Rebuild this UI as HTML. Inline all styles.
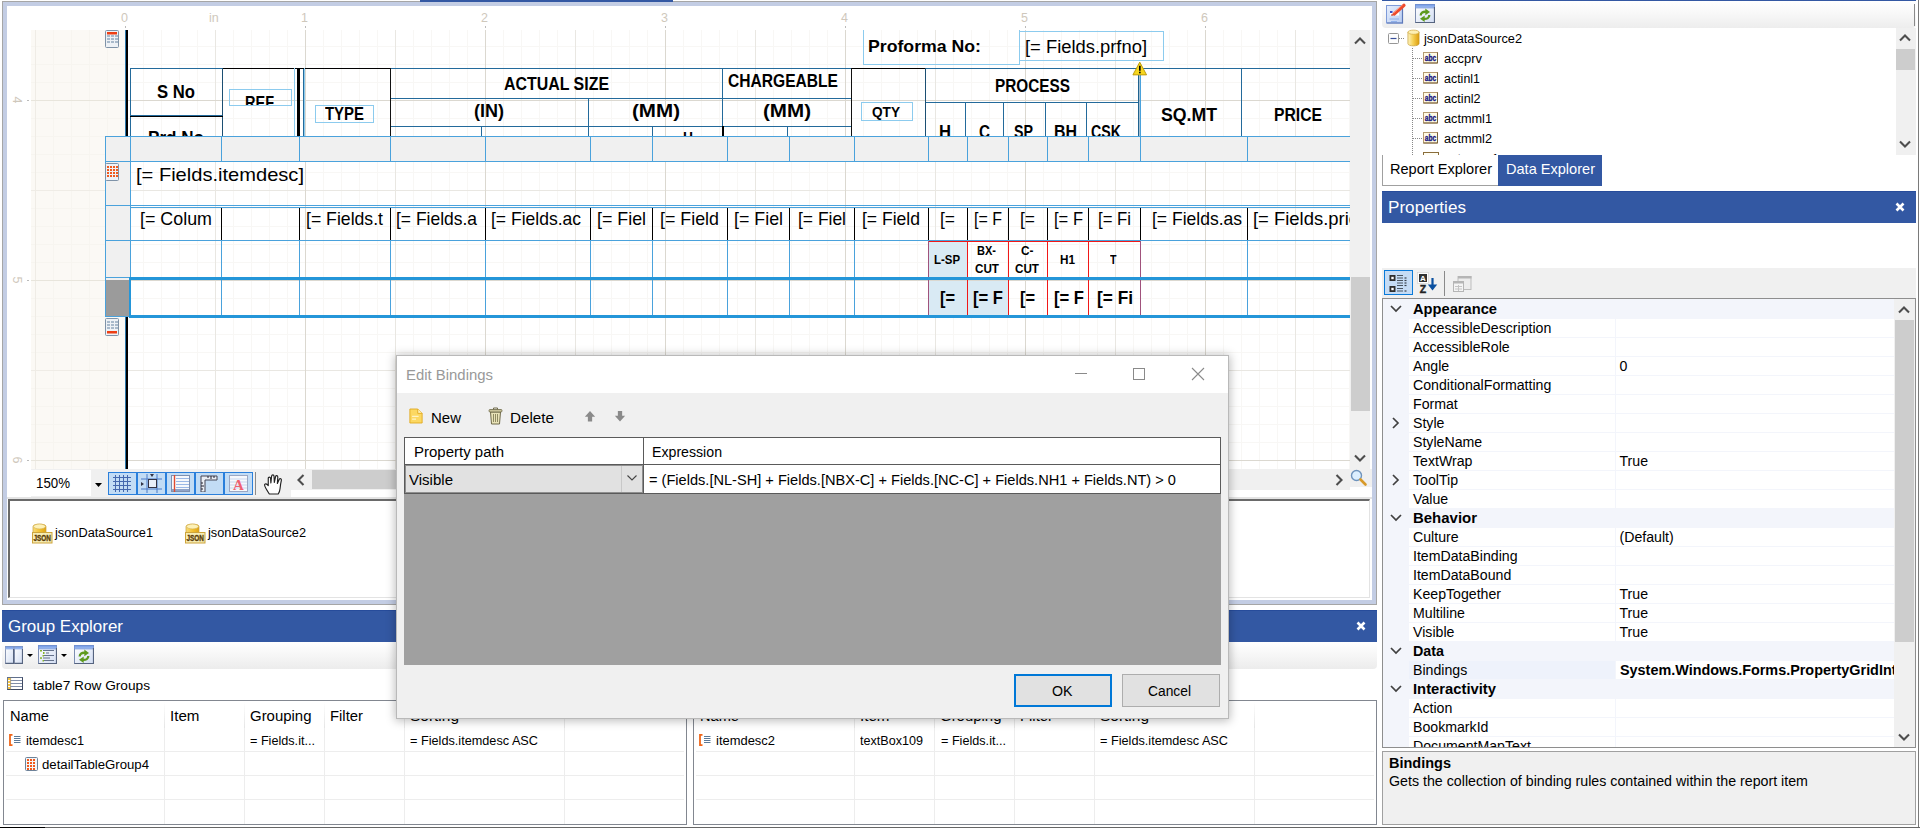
<!DOCTYPE html>
<html lang="en"><head><meta charset="utf-8"><title>Report Designer - Edit Bindings</title>
<style>
html,body{margin:0;padding:0;}
body{width:1920px;height:828px;position:relative;overflow:hidden;background:#fff;font-family:"Liberation Sans", "DejaVu Sans", sans-serif;}
div,span.t,svg{position:absolute;box-sizing:border-box;}
span.t{white-space:nowrap;transform-origin:0 50%;display:block;}
.clip{overflow:hidden;}
</style></head><body>
<div style="left:2px;top:1px;width:1375px;height:604px;background:#c3cde4;border:1px solid #a6a6a6;"></div>
<div style="left:7px;top:6px;width:1365px;height:594px;background:#fff;"></div>
<div style="left:420px;top:0px;width:253px;height:2px;background:#3358a3;"></div>
<div class="clip" style="left:31px;top:30px;width:1319px;height:439px;background-color:#fff;background-image:linear-gradient(to right,#dbd8d0 1px,transparent 1px),linear-gradient(to bottom,#dbd8d0 1px,transparent 1px),linear-gradient(to right,#e9e7e2 1px,transparent 1px),linear-gradient(to bottom,#e9e7e2 1px,transparent 1px),linear-gradient(to right,#f8f7f5 1px,transparent 1px),linear-gradient(to bottom,#f8f7f5 1px,transparent 1px);background-size:180px 180px,180px 180px,90px 90px,90px 90px,18px 18px,18px 18px;background-position:94px 0,0 70px,4px 0,0 70px,4px 0,0 16px;">
<div style="left:0px;top:0px;width:94px;height:439px;background-color:rgba(246,242,234,0.48);"></div>
<div style="left:94px;top:0px;width:1px;height:439px;background:#2d78ab;"></div>
<div style="left:95px;top:0px;width:2px;height:439px;background:#000;"></div>
<div class="clip" style="left:99px;top:30px;width:1220px;height:76px;">
<div style="left:0px;top:8px;width:93px;height:48px;border:1px solid #236a9b;"></div>
<div style="left:0px;top:55px;width:93px;height:46px;border:1px solid #236a9b;"></div>
<div style="left:92px;top:8px;width:76px;height:93px;border:1px solid #236a9b;"></div>
<div style="left:173px;top:8px;width:88px;height:93px;border:1px solid #236a9b;"></div>
<div style="left:260px;top:8px;width:333px;height:31px;border:1px solid #236a9b;"></div>
<div style="left:260px;top:38px;width:199px;height:29px;border:1px solid #236a9b;"></div>
<div style="left:458px;top:38px;width:135px;height:29px;border:1px solid #236a9b;"></div>
<div style="left:260px;top:66px;width:92px;height:35px;border:1px solid #236a9b;"></div>
<div style="left:351px;top:66px;width:108px;height:35px;border:1px solid #236a9b;"></div>
<div style="left:458px;top:66px;width:65px;height:35px;border:1px solid #236a9b;"></div>
<div style="left:522px;top:66px;width:71px;height:35px;border:1px solid #236a9b;"></div>
<div style="left:592px;top:8px;width:130px;height:31px;border:1px solid #236a9b;"></div>
<div style="left:592px;top:38px;width:130px;height:29px;border:1px solid #236a9b;"></div>
<div style="left:592px;top:66px;width:66px;height:35px;border:1px solid #236a9b;"></div>
<div style="left:657px;top:66px;width:65px;height:35px;border:1px solid #236a9b;"></div>
<div style="left:721px;top:8px;width:75px;height:93px;border:1px solid #236a9b;"></div>
<div style="left:795px;top:8px;width:214px;height:35px;border:1px solid #236a9b;"></div>
<div style="left:795px;top:42px;width:41px;height:59px;border:1px solid #236a9b;"></div>
<div style="left:835px;top:42px;width:39px;height:59px;border:1px solid #236a9b;"></div>
<div style="left:873px;top:42px;width:43px;height:59px;border:1px solid #236a9b;"></div>
<div style="left:915px;top:42px;width:42px;height:59px;border:1px solid #236a9b;"></div>
<div style="left:956px;top:42px;width:53px;height:59px;border:1px solid #236a9b;"></div>
<div style="left:1008px;top:8px;width:104px;height:93px;border:1px solid #236a9b;"></div>
<div style="left:1111px;top:8px;width:112px;height:93px;border:1px solid #236a9b;"></div>
<div style="left:92px;top:8px;width:76px;height:1px;background:#000;"></div>
<div style="left:92px;top:8px;width:1px;height:70px;background:#1c4f73;"></div>
<div style="left:167px;top:8px;width:3px;height:70px;background:#000;"></div>
<div style="left:170px;top:8px;width:90px;height:1px;background:#000;"></div>
<div style="left:260px;top:8px;width:1px;height:70px;background:#111;"></div>
<div style="left:721px;top:8px;width:75px;height:1px;background:#000;"></div>
<div style="left:721px;top:8px;width:1px;height:70px;background:#111;"></div>
<div style="left:795px;top:8px;width:1px;height:70px;background:#1c4f73;"></div>
<div style="left:0px;top:56px;width:93px;height:1px;background:#000;"></div>
<div style="left:592px;top:66px;width:2px;height:12px;background:#000;"></div>
<div style="left:1008px;top:8px;width:1px;height:70px;background:#1f628f;"></div>
<div style="left:1009px;top:8px;width:1px;height:70px;background:rgba(31,98,143,0.4);"></div>
<div style="left:1010px;top:8px;width:1px;height:70px;background:#4aa2dc;"></div>
<div style="left:99px;top:29px;width:63px;height:17px;border:1px solid #8ccbee;"></div>
<div style="left:185px;top:45px;width:59px;height:18px;border:1px solid #8ccbee;"></div>
<div style="left:731px;top:42px;width:52px;height:19px;border:1px solid #8ccbee;"></div>
<div style="left:164px;top:8px;width:1px;height:70px;background:#8ccbee;"></div>
<div style="left:174px;top:8px;width:1px;height:70px;background:#8ccbee;"></div>
<span id="t1" class="t" style="left:27px;top:19.5px;font-size:17.5px;line-height:24px;color:#000;font-weight:bold;transform:scaleX(0.9530);">S No</span>
<div class="clip" style="left:100px;top:30px;width:61px;height:15px;">
<span id="t2" class="t" style="left:15px;top:0.6px;font-size:17.5px;line-height:24px;color:#000;font-weight:bold;transform:scaleX(0.8286);">REF</span>
</div>
<span id="t3" class="t" style="left:195px;top:42.0px;font-size:17.5px;line-height:24px;color:#000;font-weight:bold;transform:scaleX(0.8530);">TYPE</span>
<span id="t4" class="t" style="left:18px;top:65.5px;font-size:17.5px;line-height:24px;color:#000;font-weight:bold;transform:scaleX(0.9760);">Prd No</span>
<span id="t5" class="t" style="left:374px;top:12.0px;font-size:17.5px;line-height:24px;color:#000;font-weight:bold;transform:scaleX(0.9101);">ACTUAL SIZE</span>
<span id="t6" class="t" style="left:344px;top:38.5px;font-size:17.5px;line-height:24px;color:#000;font-weight:bold;transform:scaleX(1.0289);">(IN)</span>
<span id="t7" class="t" style="left:502px;top:38.5px;font-size:17.5px;line-height:24px;color:#000;font-weight:bold;transform:scaleX(1.1761);">(MM)</span>
<span id="t8" class="t" style="left:598px;top:8.5px;font-size:17.5px;line-height:24px;color:#000;font-weight:bold;transform:scaleX(0.8908);">CHARGEABLE</span>
<span id="t9" class="t" style="left:633px;top:38.5px;font-size:17.5px;line-height:24px;color:#000;font-weight:bold;transform:scaleX(1.1761);">(MM)</span>
<span id="t10" class="t" style="left:742px;top:40.6px;font-size:15px;line-height:21px;color:#000;font-weight:bold;transform:scaleX(0.9078);">QTY</span>
<span id="t11" class="t" style="left:865px;top:13.5px;font-size:17.5px;line-height:24px;color:#000;font-weight:bold;transform:scaleX(0.8764);">PROCESS</span>
<span id="t12" class="t" style="left:809px;top:59.5px;font-size:17.5px;line-height:24px;color:#000;font-weight:bold;transform:scaleX(0.9493);">H</span>
<span id="t13" class="t" style="left:849px;top:59.5px;font-size:17.5px;line-height:24px;color:#000;font-weight:bold;transform:scaleX(0.8702);">C</span>
<span id="t14" class="t" style="left:884px;top:59.5px;font-size:17.5px;line-height:24px;color:#000;font-weight:bold;transform:scaleX(0.8134);">SP</span>
<span id="t15" class="t" style="left:924px;top:59.5px;font-size:17.5px;line-height:24px;color:#000;font-weight:bold;transform:scaleX(0.9098);">BH</span>
<span id="t16" class="t" style="left:961px;top:59.5px;font-size:17.5px;line-height:24px;color:#000;font-weight:bold;transform:scaleX(0.8118);">CSK</span>
<span id="t17" class="t" style="left:553px;top:66.5px;font-size:17.5px;line-height:24px;color:#000;font-weight:bold;transform:scaleX(0.7911);">H</span>
<span id="t18" class="t" style="left:1031px;top:42.5px;font-size:17.5px;line-height:24px;color:#000;font-weight:bold;transform:scaleX(1.0104);">SQ.MT</span>
<span id="t19" class="t" style="left:1144px;top:42.5px;font-size:17.5px;line-height:24px;color:#000;font-weight:bold;transform:scaleX(0.8975);">PRICE</span>
</div>
<div style="left:832px;top:0px;width:157px;height:35px;border:1px solid #8ccbee;border-top:none;"></div>
<div style="left:988px;top:1px;width:145px;height:30px;border:1px solid #8ccbee;"></div>
<span id="t20" class="t" style="left:837px;top:5.2px;font-size:17px;line-height:24px;color:#000;font-weight:bold;transform:scaleX(1.0403);">Proforma No:</span>
<span id="t21" class="t" style="left:994px;top:4.7px;font-size:17.5px;line-height:24px;color:#000;font-weight:normal;transform:scaleX(1.0495);">[= Fields.prfno]</span>
<div style="left:74px;top:106px;width:1250px;height:26px;background:#f0f0f0;"></div>
<div style="left:74px;top:106px;width:26px;height:181px;background:#f0f0f0;"></div>
<div style="left:75px;top:250px;width:23px;height:36px;background:#9b9b9b;"></div>
<div style="left:898px;top:211px;width:39px;height:37px;background:#d9eaf4;"></div>
<div style="left:898px;top:251px;width:79px;height:35px;background:#d9eaf4;"></div>
<div style="left:74px;top:106px;width:1245px;height:1px;background:#4aa2dc;"></div>
<div style="left:74px;top:131px;width:1245px;height:1px;background:#4aa2dc;"></div>
<div style="left:74px;top:175px;width:1245px;height:1px;background:#4aa2dc;"></div>
<div style="left:99px;top:177px;width:1220px;height:1px;background:#4aa2dc;"></div>
<div style="left:74px;top:210px;width:1245px;height:1px;background:#4aa2dc;"></div>
<div style="left:74px;top:247px;width:25px;height:1px;background:#4aa2dc;"></div>
<div style="left:74px;top:286px;width:25px;height:1px;background:#4aa2dc;"></div>
<div style="left:74px;top:106px;width:1px;height:181px;background:#4aa2dc;"></div>
<div style="left:99px;top:106px;width:1px;height:26px;background:#4aa2dc;"></div>
<div style="left:99px;top:210px;width:1px;height:76px;background:#4aa2dc;"></div>
<div style="left:190px;top:106px;width:1px;height:26px;background:#4aa2dc;"></div>
<div style="left:190px;top:210px;width:1px;height:76px;background:#4aa2dc;"></div>
<div style="left:268px;top:106px;width:1px;height:26px;background:#4aa2dc;"></div>
<div style="left:268px;top:210px;width:1px;height:76px;background:#4aa2dc;"></div>
<div style="left:359px;top:106px;width:1px;height:26px;background:#4aa2dc;"></div>
<div style="left:359px;top:210px;width:1px;height:76px;background:#4aa2dc;"></div>
<div style="left:454px;top:106px;width:1px;height:26px;background:#4aa2dc;"></div>
<div style="left:454px;top:210px;width:1px;height:76px;background:#4aa2dc;"></div>
<div style="left:559px;top:106px;width:1px;height:26px;background:#4aa2dc;"></div>
<div style="left:559px;top:210px;width:1px;height:76px;background:#4aa2dc;"></div>
<div style="left:621px;top:106px;width:1px;height:26px;background:#4aa2dc;"></div>
<div style="left:621px;top:210px;width:1px;height:76px;background:#4aa2dc;"></div>
<div style="left:696px;top:106px;width:1px;height:26px;background:#4aa2dc;"></div>
<div style="left:696px;top:210px;width:1px;height:76px;background:#4aa2dc;"></div>
<div style="left:758px;top:106px;width:1px;height:26px;background:#4aa2dc;"></div>
<div style="left:758px;top:210px;width:1px;height:76px;background:#4aa2dc;"></div>
<div style="left:823px;top:106px;width:1px;height:26px;background:#4aa2dc;"></div>
<div style="left:823px;top:210px;width:1px;height:76px;background:#4aa2dc;"></div>
<div style="left:897px;top:106px;width:1px;height:26px;background:#4aa2dc;"></div>
<div style="left:897px;top:210px;width:1px;height:76px;background:#4aa2dc;"></div>
<div style="left:936px;top:106px;width:1px;height:26px;background:#4aa2dc;"></div>
<div style="left:936px;top:210px;width:1px;height:76px;background:#4aa2dc;"></div>
<div style="left:977px;top:106px;width:1px;height:26px;background:#4aa2dc;"></div>
<div style="left:977px;top:210px;width:1px;height:76px;background:#4aa2dc;"></div>
<div style="left:1016px;top:106px;width:1px;height:26px;background:#4aa2dc;"></div>
<div style="left:1016px;top:210px;width:1px;height:76px;background:#4aa2dc;"></div>
<div style="left:1057px;top:106px;width:1px;height:26px;background:#4aa2dc;"></div>
<div style="left:1057px;top:210px;width:1px;height:76px;background:#4aa2dc;"></div>
<div style="left:1109px;top:106px;width:1px;height:26px;background:#4aa2dc;"></div>
<div style="left:1109px;top:210px;width:1px;height:76px;background:#4aa2dc;"></div>
<div style="left:1216px;top:106px;width:1px;height:26px;background:#4aa2dc;"></div>
<div style="left:1216px;top:210px;width:1px;height:76px;background:#4aa2dc;"></div>
<div style="left:99px;top:132px;width:1px;height:116px;background:#4aa2dc;"></div>
<div style="left:190px;top:178px;width:1px;height:32px;background:#000;"></div>
<div style="left:268px;top:178px;width:1px;height:32px;background:#000;"></div>
<div style="left:359px;top:178px;width:1px;height:32px;background:#000;"></div>
<div style="left:454px;top:178px;width:1px;height:32px;background:#000;"></div>
<div style="left:559px;top:178px;width:1px;height:32px;background:#000;"></div>
<div style="left:621px;top:178px;width:1px;height:32px;background:#000;"></div>
<div style="left:696px;top:178px;width:1px;height:32px;background:#000;"></div>
<div style="left:758px;top:178px;width:1px;height:32px;background:#000;"></div>
<div style="left:823px;top:178px;width:1px;height:32px;background:#000;"></div>
<div style="left:897px;top:178px;width:1px;height:32px;background:#000;"></div>
<div style="left:936px;top:178px;width:1px;height:32px;background:#000;"></div>
<div style="left:977px;top:178px;width:1px;height:32px;background:#000;"></div>
<div style="left:1016px;top:178px;width:1px;height:32px;background:#000;"></div>
<div style="left:1057px;top:178px;width:1px;height:32px;background:#000;"></div>
<div style="left:1109px;top:178px;width:1px;height:32px;background:#000;"></div>
<div style="left:1216px;top:178px;width:1px;height:32px;background:#000;"></div>
<div style="left:898px;top:211px;width:212px;height:1px;background:#f01818;"></div>
<div style="left:936px;top:211px;width:1px;height:75px;background:#f01818;"></div>
<div style="left:977px;top:211px;width:1px;height:75px;background:#f01818;"></div>
<div style="left:1016px;top:211px;width:1px;height:75px;background:#f01818;"></div>
<div style="left:1057px;top:211px;width:1px;height:75px;background:#f01818;"></div>
<div style="left:897px;top:211px;width:1px;height:75px;background:#a0527c;"></div>
<div style="left:1109px;top:211px;width:1px;height:75px;background:#a0527c;"></div>
<div style="left:98px;top:247px;width:1221px;height:3px;background:#2496d9;"></div>
<div style="left:98px;top:285px;width:1221px;height:3px;background:#2496d9;"></div>
<div style="left:98px;top:247px;width:2px;height:41px;background:#2496d9;"></div>
<svg style="left:1101px;top:30.5px" width="15.5" height="15" viewBox="0 0 17 16"><path d="M8.5 1 L16 15 L1 15 Z" fill="#f7d61c" stroke="#b8940a" stroke-width="1" stroke-linejoin="round"/><rect x="7.7" y="5" width="1.8" height="5.5" fill="#000"/><rect x="7.7" y="11.5" width="1.8" height="1.8" fill="#000"/></svg>
<span id="t22" class="t" style="left:105px;top:131.6px;font-size:18.5px;line-height:26px;color:#000;font-weight:normal;transform:scaleX(1.0856);">[= Fields.itemdesc]</span>
<span id="t23" class="t" style="left:109px;top:175.6px;font-size:18.5px;line-height:26px;color:#000;font-weight:normal;transform:scaleX(0.9658);">[= Colum</span>
<span id="t24" class="t" style="left:275px;top:175.6px;font-size:18.5px;line-height:26px;color:#000;font-weight:normal;transform:scaleX(0.9539);">[= Fields.t</span>
<span id="t25" class="t" style="left:365px;top:175.6px;font-size:18.5px;line-height:26px;color:#000;font-weight:normal;transform:scaleX(0.9432);">[= Fields.a</span>
<span id="t26" class="t" style="left:460px;top:175.6px;font-size:18.5px;line-height:26px;color:#000;font-weight:normal;transform:scaleX(0.9461);">[= Fields.ac</span>
<span id="t27" class="t" style="left:566px;top:175.6px;font-size:18.5px;line-height:26px;color:#000;font-weight:normal;transform:scaleX(0.9626);">[= Fiel</span>
<span id="t28" class="t" style="left:629px;top:175.6px;font-size:18.5px;line-height:26px;color:#000;font-weight:normal;transform:scaleX(0.9642);">[= Field</span>
<span id="t29" class="t" style="left:703px;top:175.6px;font-size:18.5px;line-height:26px;color:#000;font-weight:normal;transform:scaleX(0.9626);">[= Fiel</span>
<span id="t30" class="t" style="left:767px;top:175.6px;font-size:18.5px;line-height:26px;color:#000;font-weight:normal;transform:scaleX(0.9429);">[= Fiel</span>
<span id="t31" class="t" style="left:831px;top:175.6px;font-size:18.5px;line-height:26px;color:#000;font-weight:normal;transform:scaleX(0.9479);">[= Field</span>
<span id="t32" class="t" style="left:909px;top:175.6px;font-size:18.5px;line-height:26px;color:#000;font-weight:normal;transform:scaleX(0.9403);">[=</span>
<span id="t33" class="t" style="left:943px;top:175.6px;font-size:18.5px;line-height:26px;color:#000;font-weight:normal;transform:scaleX(0.8644);">[= F</span>
<span id="t34" class="t" style="left:989px;top:175.6px;font-size:18.5px;line-height:26px;color:#000;font-weight:normal;transform:scaleX(0.9403);">[=</span>
<span id="t35" class="t" style="left:1023px;top:175.6px;font-size:18.5px;line-height:26px;color:#000;font-weight:normal;transform:scaleX(0.8953);">[= F</span>
<span id="t36" class="t" style="left:1067px;top:175.6px;font-size:18.5px;line-height:26px;color:#000;font-weight:normal;transform:scaleX(0.9041);">[= Fi</span>
<span id="t37" class="t" style="left:1121px;top:175.6px;font-size:18.5px;line-height:26px;color:#000;font-weight:normal;transform:scaleX(0.9461);">[= Fields.as</span>
<span id="t38" class="t" style="left:1222px;top:175.6px;font-size:18.5px;line-height:26px;color:#000;font-weight:normal;transform:scaleX(0.9963);">[= Fields.pric</span>
<span id="t39" class="t" style="left:903px;top:222.0px;font-size:12px;line-height:17px;color:#000;font-weight:bold;transform:scaleX(0.9509);">L-SP</span>
<span id="t40" class="t" style="left:946px;top:213.0px;font-size:12px;line-height:17px;color:#000;font-weight:bold;transform:scaleX(0.9191);">BX-</span>
<span id="t41" class="t" style="left:944px;top:230.5px;font-size:12px;line-height:17px;color:#000;font-weight:bold;transform:scaleX(0.9728);">CUT</span>
<span id="t42" class="t" style="left:990px;top:213.0px;font-size:12px;line-height:17px;color:#000;font-weight:bold;transform:scaleX(0.9864);">C-</span>
<span id="t43" class="t" style="left:984px;top:230.5px;font-size:12px;line-height:17px;color:#000;font-weight:bold;transform:scaleX(0.9728);">CUT</span>
<span id="t44" class="t" style="left:1029px;top:222.0px;font-size:12px;line-height:17px;color:#000;font-weight:bold;transform:scaleX(0.9776);">H1</span>
<span id="t45" class="t" style="left:1079px;top:222.0px;font-size:12px;line-height:17px;color:#000;font-weight:bold;transform:scaleX(0.8851);">T</span>
<span id="t46" class="t" style="left:909px;top:254.6px;font-size:18.5px;line-height:26px;color:#000;font-weight:bold;transform:scaleX(0.8840);">[=</span>
<span id="t47" class="t" style="left:942px;top:254.6px;font-size:18.5px;line-height:26px;color:#000;font-weight:bold;transform:scaleX(0.8980);">[= F</span>
<span id="t48" class="t" style="left:989px;top:254.6px;font-size:18.5px;line-height:26px;color:#000;font-weight:bold;transform:scaleX(0.8840);">[=</span>
<span id="t49" class="t" style="left:1023px;top:254.6px;font-size:18.5px;line-height:26px;color:#000;font-weight:bold;transform:scaleX(0.8980);">[= F</span>
<span id="t50" class="t" style="left:1066px;top:254.6px;font-size:18.5px;line-height:26px;color:#000;font-weight:bold;transform:scaleX(0.9339);">[= Fi</span>
<svg style="left:74px;top:0px" width="14" height="18" viewBox="0 0 14 18"><rect x="0.5" y="0.5" width="13" height="17" rx="1" fill="#eef2f6" stroke="#7f93a8"/><rect x="2" y="5" width="3" height="2" fill="#a9bacb"/><rect x="2" y="8" width="3" height="2" fill="#a9bacb"/><rect x="2" y="11" width="3" height="2" fill="#a9bacb"/><rect x="6" y="5" width="3" height="2" fill="#a9bacb"/><rect x="6" y="8" width="3" height="2" fill="#a9bacb"/><rect x="6" y="11" width="3" height="2" fill="#a9bacb"/><rect x="10" y="5" width="3" height="2" fill="#a9bacb"/><rect x="10" y="8" width="3" height="2" fill="#a9bacb"/><rect x="10" y="11" width="3" height="2" fill="#a9bacb"/><rect x="2" y="2" width="10" height="2.5" fill="#ee3f14"/></svg>
<svg style="left:74px;top:133px" width="14" height="18" viewBox="0 0 14 18"><rect x="0.5" y="0.5" width="13" height="17" rx="1" fill="#eef2f6" stroke="#7f93a8"/><rect x="2" y="3" width="2" height="2" fill="#f05a1e"/><rect x="2" y="6" width="2" height="2" fill="#f05a1e"/><rect x="2" y="9" width="2" height="2" fill="#f05a1e"/><rect x="2" y="12" width="2" height="2" fill="#f05a1e"/><rect x="5" y="3" width="2" height="2" fill="#f05a1e"/><rect x="5" y="6" width="2" height="2" fill="#f05a1e"/><rect x="5" y="9" width="2" height="2" fill="#f05a1e"/><rect x="5" y="12" width="2" height="2" fill="#f05a1e"/><rect x="8" y="3" width="2" height="2" fill="#f05a1e"/><rect x="8" y="6" width="2" height="2" fill="#f05a1e"/><rect x="8" y="9" width="2" height="2" fill="#f05a1e"/><rect x="8" y="12" width="2" height="2" fill="#f05a1e"/><rect x="11" y="3" width="2" height="2" fill="#f05a1e"/><rect x="11" y="6" width="2" height="2" fill="#f05a1e"/><rect x="11" y="9" width="2" height="2" fill="#f05a1e"/><rect x="11" y="12" width="2" height="2" fill="#f05a1e"/></svg>
<svg style="left:74px;top:288px" width="14" height="18" viewBox="0 0 14 18"><rect x="0.5" y="0.5" width="13" height="17" rx="1" fill="#eef2f6" stroke="#7f93a8"/><rect x="2" y="3" width="3" height="2" fill="#a9bacb"/><rect x="2" y="6" width="3" height="2" fill="#a9bacb"/><rect x="2" y="9" width="3" height="2" fill="#a9bacb"/><rect x="6" y="3" width="3" height="2" fill="#a9bacb"/><rect x="6" y="6" width="3" height="2" fill="#a9bacb"/><rect x="6" y="9" width="3" height="2" fill="#a9bacb"/><rect x="10" y="3" width="3" height="2" fill="#a9bacb"/><rect x="10" y="6" width="3" height="2" fill="#a9bacb"/><rect x="10" y="9" width="3" height="2" fill="#a9bacb"/><rect x="2" y="13" width="10" height="2.5" fill="#ee3f14"/></svg>
</div>
<span id="t51" class="t" style="left:121px;top:9.1px;font-size:12.5px;line-height:18px;color:#cfc8bc;font-weight:normal;">0</span>
<div style="left:125px;top:26px;width:1px;height:2px;background:#bbb;"></div>
<span id="t52" class="t" style="left:301px;top:9.1px;font-size:12.5px;line-height:18px;color:#cfc8bc;font-weight:normal;">1</span>
<div style="left:305px;top:26px;width:1px;height:2px;background:#bbb;"></div>
<span id="t53" class="t" style="left:481px;top:9.1px;font-size:12.5px;line-height:18px;color:#cfc8bc;font-weight:normal;">2</span>
<div style="left:485px;top:26px;width:1px;height:2px;background:#bbb;"></div>
<span id="t54" class="t" style="left:661px;top:9.1px;font-size:12.5px;line-height:18px;color:#cfc8bc;font-weight:normal;">3</span>
<div style="left:665px;top:26px;width:1px;height:2px;background:#bbb;"></div>
<span id="t55" class="t" style="left:841px;top:9.1px;font-size:12.5px;line-height:18px;color:#cfc8bc;font-weight:normal;">4</span>
<div style="left:845px;top:26px;width:1px;height:2px;background:#bbb;"></div>
<span id="t56" class="t" style="left:1021px;top:9.1px;font-size:12.5px;line-height:18px;color:#cfc8bc;font-weight:normal;">5</span>
<div style="left:1025px;top:26px;width:1px;height:2px;background:#bbb;"></div>
<span id="t57" class="t" style="left:1201px;top:9.1px;font-size:12.5px;line-height:18px;color:#cfc8bc;font-weight:normal;">6</span>
<div style="left:1205px;top:26px;width:1px;height:2px;background:#bbb;"></div>
<span id="t58" class="t" style="left:209px;top:9.1px;font-size:12.5px;line-height:18px;color:#cfc8bc;font-weight:normal;">in</span>
<span class="t" style="left:11px;top:91px;font-size:12.5px;line-height:18px;color:#cfc8bc;transform:rotate(90deg);transform-origin:50% 50%;width:12px;text-align:center;">4</span>
<div style="left:27px;top:100px;width:2px;height:1px;background:#bbb;"></div>
<span class="t" style="left:11px;top:271px;font-size:12.5px;line-height:18px;color:#cfc8bc;transform:rotate(90deg);transform-origin:50% 50%;width:12px;text-align:center;">5</span>
<div style="left:27px;top:280px;width:2px;height:1px;background:#bbb;"></div>
<span class="t" style="left:11px;top:451px;font-size:12.5px;line-height:18px;color:#cfc8bc;transform:rotate(90deg);transform-origin:50% 50%;width:12px;text-align:center;">6</span>
<div style="left:27px;top:460px;width:2px;height:1px;background:#bbb;"></div>
<div style="left:1350px;top:30px;width:20px;height:439px;background:#f0f0f0;"></div>
<div style="left:1351px;top:277px;width:19px;height:134px;background:#cdcdcd;"></div>
<svg style="left:1354px;top:34.5px" width="12" height="12" viewBox="0 0 12 12"><polyline points="1,8.5 6,3.5 11,8.5" fill="none" stroke="#4d4d4d" stroke-width="2.1"/></svg>
<svg style="left:1354px;top:452px" width="12" height="12" viewBox="0 0 12 12"><polyline points="1,3.5 6,8.5 11,3.5" fill="none" stroke="#4d4d4d" stroke-width="2.1"/></svg>
<div style="left:7px;top:469px;width:1365px;height:29px;background:#f0f0f0;"></div>
<div style="left:7px;top:469px;width:24px;height:29px;background:#fff;"></div>
<div style="left:31px;top:470px;width:60px;height:26px;background:#fff;"></div>
<span id="t59" class="t" style="left:36px;top:472.4px;font-size:15px;line-height:21px;color:#000;font-weight:normal;transform:scaleX(0.8860);">150%</span>
<svg style="left:95px;top:483px" width="7" height="4" viewBox="0 0 7 4"><path d="M0 0 H7 L3.5 4 Z" fill="#000"/></svg>
<div style="left:108px;top:472px;width:29px;height:23px;background:#c2dcf5;border:1px solid #2a7fdb;"></div>
<div style="left:137px;top:472px;width:29px;height:23px;background:#c2dcf5;border:1px solid #2a7fdb;"></div>
<div style="left:166px;top:472px;width:29px;height:23px;background:#c2dcf5;border:1px solid #2a7fdb;"></div>
<div style="left:195px;top:472px;width:29px;height:23px;background:#c2dcf5;border:1px solid #2a7fdb;"></div>
<div style="left:224px;top:472px;width:29px;height:23px;background:#c2dcf5;border:1px solid #2a7fdb;"></div>
<svg style="left:113px;top:475px" width="19" height="17" viewBox="0 0 19 17"><g stroke="#4468ae" stroke-width="1"><path d="M2.5 0V17M6.5 0V17M10.5 0V17M14.5 0V17M0 2.5H18M0 6.5H18M0 10.5H18M0 14.5H18"/></g></svg>
<svg style="left:141px;top:474px" width="21" height="19" viewBox="0 0 21 19"><g stroke="#4a7ac8" stroke-width="1"><path d="M6 0V19M16 0V19M0 5H21M0 15H21"/></g><rect x="7.5" y="5.500" width="8" height="8" fill="#e8eef8" stroke="#334"/><path d="M0 8l3 2-3 2z" fill="#334"/><path d="M9 0h4l-2 3z" fill="#334"/></svg>
<svg style="left:171px;top:475px" width="19" height="17" viewBox="0 0 19 17"><rect x="0.5" y="0.500" width="18" height="16" fill="#f6f8fc" stroke="#7d8fb0"/><g stroke="#9bb8e6" stroke-width="1"><path d="M5 3.5H18M5 6.5H18M5 9.5H18M5 12.5H18"/></g><rect x="1" y="14" width="17" height="2" fill="#8fa3c8"/><path d="M3.5 0V17" stroke="#e04a30" stroke-width="1.4"/></svg>
<svg style="left:200px;top:475px" width="19" height="17" viewBox="0 0 19 17"><path d="M1 1H17V5H5V17H1Z" fill="#e9edf3" stroke="#445" stroke-width="1"/><g stroke="#223" stroke-width="1"><path d="M8 1V3M11 1V4M14 1V3M1 8H3M1 11H4M1 14H3"/></g></svg>
<svg style="left:229px;top:475px" width="19" height="17" viewBox="0 0 19 17"><rect x="0.5" y="0.500" width="18" height="16" fill="#f6f8fc" stroke="#9aa7c4"/><g stroke="#c8d6ee" stroke-width="1"><path d="M1 4H18M1 7H18M1 10H18M1 13H18"/></g><text x="9.500" y="14.500" text-anchor="middle" font-family="Liberation Serif, serif" font-weight="bold" font-size="15" fill="#f06070">A</text></svg>
<div style="left:255px;top:472px;width:1px;height:23px;background:#8a8a8a;"></div>
<svg style="left:262px;top:473px" width="23" height="22" viewBox="0 0 20 21"><path d="M6 20 C4 17 1.500 13 1.500 11.500 C1.500 10 3.500 10 5 12 L5 5 C5 3.500 7 3.500 7.200 5 L7.500 9.500 L8.200 3 C8.400 1.300 10.300 1.300 10.500 3 L10.800 9 L12 3.500 C12.300 2 14.200 2.300 14.100 4 L13.700 10 L15.500 6 C16.200 4.800 17.800 5.500 17.500 7 C16.800 10 16.500 12 16.300 14.500 C16.100 17 15.500 18.500 14.500 20 Z" fill="#fff" stroke="#222" stroke-width="1.100" stroke-linejoin="round"/></svg>
<div style="left:291px;top:470px;width:1059px;height:20px;background:#f0f0f0;"></div>
<div style="left:291px;top:490px;width:1059px;height:7px;background:#fff;"></div>
<div style="left:312px;top:470px;width:760px;height:19px;background:#cdcdcd;"></div>
<svg style="left:295px;top:474px" width="12" height="12" viewBox="0 0 12 12"><polyline points="8.5,1 3.5,6 8.5,11" fill="none" stroke="#4d4d4d" stroke-width="2.1"/></svg>
<svg style="left:1333px;top:474px" width="12" height="12" viewBox="0 0 12 12"><polyline points="3.5,1 8.5,6 3.5,11" fill="none" stroke="#4d4d4d" stroke-width="2.1"/></svg>
<svg style="left:1350px;top:469px" width="18" height="18" viewBox="0 0 18 18"><circle cx="6.500" cy="6.500" r="5" fill="#dcefff" stroke="#6f94bd" stroke-width="1.400"/><path d="M10.500 10.500L15.500 15.500" stroke="#d89a2a" stroke-width="2.600" stroke-linecap="round"/></svg>
<div style="left:1350px;top:487px;width:22px;height:11px;background:#fff;"></div>
<div style="left:7px;top:497px;width:1365px;height:2px;background:#e4e4e4;"></div>
<div style="left:8px;top:499px;width:1362px;height:99px;background:#fff;border-top:2px solid #6a6a6a;border-left:2px solid #6a6a6a;border-right:1px solid #e3e3e3;border-bottom:1px solid #e3e3e3;"></div>
<svg style="left:32px;top:523px" width="21" height="21" viewBox="0 0 21 21"><defs><linearGradient id="jg" x1="0" y1="0" x2="1" y2="0"><stop offset="0" stop-color="#f8dc78"/><stop offset="0.5" stop-color="#f3c234"/><stop offset="1" stop-color="#e0a414"/></linearGradient></defs><path d="M1 3.5C1 0.3 14 0.3 14 3.5V11H1Z" fill="url(#jg)" stroke="#c9a040" stroke-width="0.7"/><ellipse cx="7.5" cy="3.5" rx="6" ry="2.4" fill="#fdf1b8" stroke="#d4b050" stroke-width="0.6"/><rect x="0.5" y="9.5" width="19.5" height="10.5" fill="#f6ecb4" stroke="#cda43c" stroke-width="1"/><text x="10.2" y="18.3" text-anchor="middle" font-family="Liberation Sans, sans-serif" font-weight="bold" font-size="9" fill="#5a3c06" stroke="#5a3c06" stroke-width="0.35" textLength="17.5" lengthAdjust="spacingAndGlyphs">JSON</text></svg>
<span id="t60" class="t" style="left:55px;top:523.6px;font-size:12.5px;line-height:18px;color:#000;font-weight:normal;transform:scaleX(1.0218);">jsonDataSource1</span>
<svg style="left:185px;top:523px" width="21" height="21" viewBox="0 0 21 21"><defs><linearGradient id="jg" x1="0" y1="0" x2="1" y2="0"><stop offset="0" stop-color="#f8dc78"/><stop offset="0.5" stop-color="#f3c234"/><stop offset="1" stop-color="#e0a414"/></linearGradient></defs><path d="M1 3.5C1 0.3 14 0.3 14 3.5V11H1Z" fill="url(#jg)" stroke="#c9a040" stroke-width="0.7"/><ellipse cx="7.5" cy="3.5" rx="6" ry="2.4" fill="#fdf1b8" stroke="#d4b050" stroke-width="0.6"/><rect x="0.5" y="9.5" width="19.5" height="10.5" fill="#f6ecb4" stroke="#cda43c" stroke-width="1"/><text x="10.2" y="18.3" text-anchor="middle" font-family="Liberation Sans, sans-serif" font-weight="bold" font-size="9" fill="#5a3c06" stroke="#5a3c06" stroke-width="0.35" textLength="17.5" lengthAdjust="spacingAndGlyphs">JSON</text></svg>
<span id="t61" class="t" style="left:208px;top:523.6px;font-size:12.5px;line-height:18px;color:#000;font-weight:normal;transform:scaleX(1.0218);">jsonDataSource2</span>
<div style="left:2px;top:610px;width:1375px;height:32px;background:#3358a3;border-top:1px solid #274c9b;"></div>
<span id="t62" class="t" style="left:8px;top:615.1px;font-size:17px;line-height:24px;color:#fff;font-weight:normal;transform:scaleX(0.9976);">Group Explorer</span>
<svg style="left:1356px;top:621px" width="10" height="10" viewBox="0 0 10 10"><path d="M1.500 1.500L8.500 8.500M8.500 1.500L1.500 8.500" stroke="#fff" stroke-width="2.600"/></svg>
<div style="left:2px;top:642px;width:1375px;height:27px;background:linear-gradient(#ffffff,#f6f6f6 50%,#ececec);border-radius:0 0 4px 4px;"></div>
<svg width="0" height="0" style="left:0;top:0"><defs><linearGradient id="wg" x1="0" y1="0" x2="1" y2="1"><stop offset="0" stop-color="#ffffff"/><stop offset="1" stop-color="#d3def3"/></linearGradient><linearGradient id="hg" x1="0" y1="0" x2="0" y2="1"><stop offset="0" stop-color="#6f98e6"/><stop offset="1" stop-color="#a9c2f0"/></linearGradient></defs></svg>
<svg style="left:5px;top:646px" width="18" height="18" viewBox="0 0 18 18"><rect x="0.5" y="0.5" width="8" height="17" fill="url(#wg)" stroke="#8a97b4"/><rect x="9.5" y="0.5" width="8" height="17" fill="url(#wg)" stroke="#8a97b4"/><rect x="0.5" y="0.5" width="8" height="3" fill="url(#hg)"/><rect x="9.5" y="0.5" width="8" height="3" fill="url(#hg)"/><path d="M8.6 3V17.4H0.5M17.5 3V17.4H9.5" fill="none" stroke="#56647f" stroke-width="1.2"/></svg>
<svg style="left:27px;top:654px" width="6" height="3" viewBox="0 0 6 3"><path d="M0 0H6L3 3Z" fill="#000"/></svg>
<svg style="left:38px;top:645px" width="19" height="19" viewBox="0 0 19 19"><rect x="0.5" y="0.5" width="18" height="18" fill="url(#wg)" stroke="#7d8db0"/><rect x="0.5" y="0.5" width="18" height="3.5" fill="url(#hg)" stroke="#6f8fd6" stroke-width="0.6"/><path d="M18.5 3V18.5H0.5" fill="none" stroke="#56647f" stroke-width="1.2"/><g stroke="#66738c" stroke-width="1.1"><path d="M5 5.5H16M8 8H11M6 10.5H16M5 13H12M6 15.5H16"/></g><g fill="#86b32a"><rect x="2" y="5" width="2" height="1.5"/><rect x="5" y="7" width="1.5" height="2"/><rect x="4.5" y="10" width="1.5" height="1.5"/><rect x="2" y="12.3" width="2" height="1.5"/><rect x="4.5" y="15" width="1.5" height="1.5"/></g></svg>
<svg style="left:61px;top:654px" width="6" height="3" viewBox="0 0 6 3"><path d="M0 0H6L3 3Z" fill="#000"/></svg>
<svg style="left:74px;top:645px" width="20" height="19" viewBox="0 0 20 19"><rect x="0.5" y="0.5" width="19" height="18" fill="url(#wg)" stroke="#7d8db0"/><rect x="0.5" y="0.5" width="19" height="3.5" fill="url(#hg)" stroke="#6f8fd6" stroke-width="0.6"/><path d="M19.5 3V18.5H0.5" fill="none" stroke="#56647f" stroke-width="1.2"/><g fill="none" stroke="#5d9a1e" stroke-width="2.3"><path d="M5.7 11.6C5.7 8.6 8 7.5 11 7.8"/><path d="M14.3 11C14.3 14 12 15 9 14.8"/></g><g fill="#5d9a1e"><path d="M10.3 4.6L15 7.9L10.3 11.2Z"/><path d="M9.7 18L5 14.7L9.7 11.4Z"/></g></svg>
<svg style="left:7px;top:677px" width="16" height="13" viewBox="0 0 17 13" preserveAspectRatio="none"><rect x="0.5" y="0.5" width="16" height="12" fill="#fff" stroke="#5f6f8c"/><path d="M16.5 0.5V12.5H0.5" fill="none" stroke="#3f4a63" stroke-width="1.1"/><g stroke="#7d8aa6" stroke-width="1"><path d="M4 3.5H16M4 6.5H16M4 9.5H16"/></g><path d="M3.8 0.5V12.5" stroke="#8a8060" stroke-width="0.8"/><g fill="#f6c443"><rect x="1" y="1" width="2.5" height="2"/><rect x="1" y="4" width="2.5" height="2"/><rect x="1" y="7" width="2.5" height="2"/><rect x="1" y="10" width="2.5" height="2"/></g></svg>
<span id="t63" class="t" style="left:33px;top:676.6px;font-size:13px;line-height:18px;color:#000;font-weight:normal;transform:scaleX(1.0514);">table7 Row Groups</span>
<div style="left:3px;top:700px;width:684px;height:125px;background:#fff;border:1px solid #828790;"></div>
<div style="left:164px;top:702px;width:1px;height:26px;background:linear-gradient(#fff,#e5e5e5);"></div>
<div style="left:164px;top:728px;width:1px;height:96px;background:#ededed;"></div>
<div style="left:244px;top:702px;width:1px;height:26px;background:linear-gradient(#fff,#e5e5e5);"></div>
<div style="left:244px;top:728px;width:1px;height:96px;background:#ededed;"></div>
<div style="left:324px;top:702px;width:1px;height:26px;background:linear-gradient(#fff,#e5e5e5);"></div>
<div style="left:324px;top:728px;width:1px;height:96px;background:#ededed;"></div>
<div style="left:404px;top:702px;width:1px;height:26px;background:linear-gradient(#fff,#e5e5e5);"></div>
<div style="left:404px;top:728px;width:1px;height:96px;background:#ededed;"></div>
<div style="left:564px;top:702px;width:1px;height:26px;background:linear-gradient(#fff,#e5e5e5);"></div>
<div style="left:564px;top:728px;width:1px;height:96px;background:#ededed;"></div>
<div style="left:6px;top:751px;width:678px;height:1px;background:#ededed;"></div>
<div style="left:6px;top:775px;width:678px;height:1px;background:#ededed;"></div>
<div style="left:6px;top:799px;width:678px;height:1px;background:#ededed;"></div>
<span id="t64" class="t" style="left:10px;top:705.7px;font-size:14.7px;line-height:21px;color:#000;font-weight:normal;transform:scaleX(0.9952);">Name</span>
<span id="t65" class="t" style="left:170px;top:705.7px;font-size:14.7px;line-height:21px;color:#000;font-weight:normal;transform:scaleX(1.0323);">Item</span>
<span id="t66" class="t" style="left:250px;top:705.7px;font-size:14.7px;line-height:21px;color:#000;font-weight:normal;transform:scaleX(1.0178);">Grouping</span>
<span id="t67" class="t" style="left:330px;top:705.7px;font-size:14.7px;line-height:21px;color:#000;font-weight:normal;transform:scaleX(1.0110);">Filter</span>
<span id="t68" class="t" style="left:410px;top:705.7px;font-size:14.7px;line-height:21px;color:#000;font-weight:normal;transform:scaleX(1.0527);">Sorting</span>
<div style="left:693px;top:700px;width:684px;height:125px;background:#fff;border:1px solid #828790;"></div>
<div style="left:854px;top:702px;width:1px;height:26px;background:linear-gradient(#fff,#e5e5e5);"></div>
<div style="left:854px;top:728px;width:1px;height:96px;background:#ededed;"></div>
<div style="left:934px;top:702px;width:1px;height:26px;background:linear-gradient(#fff,#e5e5e5);"></div>
<div style="left:934px;top:728px;width:1px;height:96px;background:#ededed;"></div>
<div style="left:1014px;top:702px;width:1px;height:26px;background:linear-gradient(#fff,#e5e5e5);"></div>
<div style="left:1014px;top:728px;width:1px;height:96px;background:#ededed;"></div>
<div style="left:1094px;top:702px;width:1px;height:26px;background:linear-gradient(#fff,#e5e5e5);"></div>
<div style="left:1094px;top:728px;width:1px;height:96px;background:#ededed;"></div>
<div style="left:1254px;top:702px;width:1px;height:26px;background:linear-gradient(#fff,#e5e5e5);"></div>
<div style="left:1254px;top:728px;width:1px;height:96px;background:#ededed;"></div>
<div style="left:696px;top:751px;width:678px;height:1px;background:#ededed;"></div>
<div style="left:696px;top:775px;width:678px;height:1px;background:#ededed;"></div>
<div style="left:696px;top:799px;width:678px;height:1px;background:#ededed;"></div>
<span id="t69" class="t" style="left:700px;top:705.7px;font-size:14.7px;line-height:21px;color:#000;font-weight:normal;transform:scaleX(0.9952);">Name</span>
<span id="t70" class="t" style="left:860px;top:705.7px;font-size:14.7px;line-height:21px;color:#000;font-weight:normal;transform:scaleX(1.0323);">Item</span>
<span id="t71" class="t" style="left:940px;top:705.7px;font-size:14.7px;line-height:21px;color:#000;font-weight:normal;transform:scaleX(1.0178);">Grouping</span>
<span id="t72" class="t" style="left:1020px;top:705.7px;font-size:14.7px;line-height:21px;color:#000;font-weight:normal;transform:scaleX(1.0110);">Filter</span>
<span id="t73" class="t" style="left:1100px;top:705.7px;font-size:14.7px;line-height:21px;color:#000;font-weight:normal;transform:scaleX(1.0527);">Sorting</span>
<svg style="left:9px;top:734px" width="12" height="12" viewBox="0 0 12 12"><path d="M3.500 0.800H1V11.200H3.500" fill="none" stroke="#f0661a" stroke-width="1.800"/><g stroke="#5b7a99" stroke-width="1"><path d="M5 2.500H11.500M5 4.500H11.500M5 6.500H11.500M5 8.500H11.500"/></g></svg>
<span id="t74" class="t" style="left:26px;top:731.6px;font-size:12.5px;line-height:18px;color:#000;font-weight:normal;transform:scaleX(1.0178);">itemdesc1</span>
<span id="t75" class="t" style="left:250px;top:731.6px;font-size:12.5px;line-height:18px;color:#000;font-weight:normal;transform:scaleX(1.0114);">= Fields.it...</span>
<span id="t76" class="t" style="left:410px;top:731.6px;font-size:12.5px;line-height:18px;color:#000;font-weight:normal;transform:scaleX(1.0151);">= Fields.itemdesc ASC</span>
<svg style="left:25px;top:757px" width="13" height="14" viewBox="0 0 13 14"><rect x="0.500" y="0.500" width="12" height="13" rx="1" fill="#f4f7fa" stroke="#6d8299"/><rect x="2" y="2" width="2" height="2" fill="#f05a1e"/><rect x="2" y="5" width="2" height="2" fill="#f05a1e"/><rect x="2" y="8" width="2" height="2" fill="#f05a1e"/><rect x="2" y="11" width="2" height="2" fill="#f05a1e"/><rect x="5" y="2" width="2" height="2" fill="#f05a1e"/><rect x="5" y="5" width="2" height="2" fill="#f05a1e"/><rect x="5" y="8" width="2" height="2" fill="#f05a1e"/><rect x="5" y="11" width="2" height="2" fill="#f05a1e"/><rect x="8" y="2" width="2" height="2" fill="#f05a1e"/><rect x="8" y="5" width="2" height="2" fill="#f05a1e"/><rect x="8" y="8" width="2" height="2" fill="#f05a1e"/><rect x="8" y="11" width="2" height="2" fill="#f05a1e"/></svg>
<span id="t77" class="t" style="left:42px;top:755.6px;font-size:12.5px;line-height:18px;color:#000;font-weight:normal;transform:scaleX(1.0545);">detailTableGroup4</span>
<svg style="left:699px;top:734px" width="12" height="12" viewBox="0 0 12 12"><path d="M3.500 0.800H1V11.200H3.500" fill="none" stroke="#f0661a" stroke-width="1.800"/><g stroke="#5b7a99" stroke-width="1"><path d="M5 2.500H11.500M5 4.500H11.500M5 6.500H11.500M5 8.500H11.500"/></g></svg>
<span id="t78" class="t" style="left:716px;top:731.6px;font-size:12.5px;line-height:18px;color:#000;font-weight:normal;transform:scaleX(1.0354);">itemdesc2</span>
<span id="t79" class="t" style="left:860px;top:731.6px;font-size:12.5px;line-height:18px;color:#000;font-weight:normal;transform:scaleX(1.0072);">textBox109</span>
<span id="t80" class="t" style="left:941px;top:731.6px;font-size:12.5px;line-height:18px;color:#000;font-weight:normal;transform:scaleX(1.0114);">= Fields.it...</span>
<span id="t81" class="t" style="left:1100px;top:731.6px;font-size:12.5px;line-height:18px;color:#000;font-weight:normal;transform:scaleX(1.0151);">= Fields.itemdesc ASC</span>
<div style="left:1382px;top:0px;width:534px;height:1px;background:#3358a3;"></div>
<div style="left:1382px;top:1px;width:534px;height:27px;background:linear-gradient(#ffffff,#f7f7f7 50%,#ededed);border-radius:0 0 4px 4px;"></div>
<div style="left:1914px;top:4px;width:1px;height:22px;background:#8a8a8a;"></div>
<svg style="left:1385px;top:2px" width="23" height="23" viewBox="0 0 23 23"><defs><linearGradient id="eg" x1="0" y1="0" x2="1" y2="1"><stop offset="0" stop-color="#e6eefc"/><stop offset="1" stop-color="#b9cdf2"/></linearGradient></defs><rect x="1.5" y="3.5" width="16" height="17.5" fill="url(#eg)" stroke="#7d9ad8"/><path d="M17.5 5V21H2" fill="none" stroke="#5d78b8" stroke-width="1.2"/><rect x="5" y="10" width="9" height="3.5" fill="#fff"/><rect x="5" y="9" width="2.5" height="2" fill="#3a50c8"/><path d="M4.5 17H14M6 19.5H12" stroke="#8fb0ea" stroke-width="1"/><path d="M19 3.2L9.2 12" stroke="#ee4a2c" stroke-width="3.2" stroke-linecap="round"/><path d="M18.2 2.2L8.6 11" stroke="#f9a08a" stroke-width="0.9"/><path d="M8.2 12.8L6.2 13.2" stroke="#c03018" stroke-width="1.2"/></svg>
<svg style="left:1415px;top:4px" width="20" height="19" viewBox="0 0 20 19"><rect x="0.5" y="0.5" width="19" height="18" fill="url(#wg)" stroke="#7d8db0"/><rect x="0.5" y="0.5" width="19" height="3.5" fill="url(#hg)" stroke="#6f8fd6" stroke-width="0.6"/><path d="M19.5 3V18.5H0.5" fill="none" stroke="#56647f" stroke-width="1.2"/><g fill="none" stroke="#5d9a1e" stroke-width="2.3"><path d="M5.7 11.6C5.7 8.6 8 7.5 11 7.8"/><path d="M14.3 11C14.3 14 12 15 9 14.8"/></g><g fill="#5d9a1e"><path d="M10.3 4.6L15 7.9L10.3 11.2Z"/><path d="M9.7 18L5 14.7L9.7 11.4Z"/></g></svg>
<div style="left:1896px;top:28px;width:20px;height:127px;background:#f0f0f0;"></div>
<div style="left:1896px;top:49px;width:19px;height:21px;background:#cdcdcd;"></div>
<svg style="left:1899px;top:32px" width="12" height="12" viewBox="0 0 12 12"><polyline points="1,8.5 6,3.5 11,8.5" fill="none" stroke="#4d4d4d" stroke-width="2.1"/></svg>
<svg style="left:1899px;top:138px" width="12" height="12" viewBox="0 0 12 12"><polyline points="1,3.5 6,8.5 11,3.5" fill="none" stroke="#4d4d4d" stroke-width="2.1"/></svg>
<svg style="left:1388px;top:33px" width="11" height="11" viewBox="0 0 11 11"><rect x="0.500" y="0.500" width="10" height="10" rx="1" fill="#fdfdfd" stroke="#969696"/><path d="M2.500 5.500H8.500" stroke="#3a4f9a" stroke-width="1.200"/></svg>
<svg style="left:1399px;top:38px" width="5" height="1" viewBox="0 0 5 1"><path d="M0 0.500H5" stroke="#888" stroke-dasharray="1 1"/></svg>
<svg style="left:1406.500px;top:29px" width="13" height="18" viewBox="0 0 14 18" preserveAspectRatio="none"><defs><linearGradient id="cy" x1="0" y1="0" x2="1" y2="0"><stop offset="0" stop-color="#fdf3c0"/><stop offset="0.45" stop-color="#f6d257"/><stop offset="1" stop-color="#dc9c0c"/></linearGradient></defs><path d="M1 3.2V14.6C1 17.6 13 17.6 13 14.600V3.2Z" fill="url(#cy)" stroke="#c49a2a" stroke-width="0.7"/><ellipse cx="7" cy="3.2" rx="6" ry="2.100" fill="#fdf0b4" stroke="#cfa63a" stroke-width="0.7"/></svg>
<span id="t82" class="t" style="left:1424px;top:30.1px;font-size:12.5px;line-height:18px;color:#000;font-weight:normal;transform:scaleX(1.0218);">jsonDataSource2</span>
<svg style="left:1412px;top:48px" width="1" height="107" viewBox="0 0 1 107"><path d="M0.500 0V107" stroke="#888" stroke-dasharray="1 1"/></svg>
<svg style="left:1413px;top:58px" width="10" height="1" viewBox="0 0 10 1"><path d="M0 0.500H10" stroke="#888" stroke-dasharray="1 1"/></svg>
<svg style="left:1423px;top:52px" width="15" height="12" viewBox="0 0 15 12"><rect x="0.5" y="0.5" width="14" height="10.5" fill="#fffbe6" stroke="#b39a72"/><path d="M14.5 0.5V11H0.5" fill="none" stroke="#7a6038" stroke-width="1"/><text x="7.500" y="9" text-anchor="middle" font-family="Liberation Sans, sans-serif" font-weight="bold" font-size="9.5" fill="#12127e" stroke="#12127e" stroke-width="0.3" textLength="11.5" lengthAdjust="spacingAndGlyphs">abc</text></svg>
<span id="t83" class="t" style="left:1444px;top:50.1px;font-size:12.5px;line-height:18px;color:#000;font-weight:normal;transform:scaleX(1.0318);">accprv</span>
<svg style="left:1413px;top:78px" width="10" height="1" viewBox="0 0 10 1"><path d="M0 0.500H10" stroke="#888" stroke-dasharray="1 1"/></svg>
<svg style="left:1423px;top:72px" width="15" height="12" viewBox="0 0 15 12"><rect x="0.5" y="0.5" width="14" height="10.5" fill="#fffbe6" stroke="#b39a72"/><path d="M14.5 0.5V11H0.5" fill="none" stroke="#7a6038" stroke-width="1"/><text x="7.500" y="9" text-anchor="middle" font-family="Liberation Sans, sans-serif" font-weight="bold" font-size="9.5" fill="#12127e" stroke="#12127e" stroke-width="0.3" textLength="11.5" lengthAdjust="spacingAndGlyphs">abc</text></svg>
<span id="t84" class="t" style="left:1444px;top:70.1px;font-size:12.5px;line-height:18px;color:#000;font-weight:normal;transform:scaleX(0.9961);">actinl1</span>
<svg style="left:1413px;top:98px" width="10" height="1" viewBox="0 0 10 1"><path d="M0 0.500H10" stroke="#888" stroke-dasharray="1 1"/></svg>
<svg style="left:1423px;top:92px" width="15" height="12" viewBox="0 0 15 12"><rect x="0.5" y="0.5" width="14" height="10.5" fill="#fffbe6" stroke="#b39a72"/><path d="M14.5 0.5V11H0.5" fill="none" stroke="#7a6038" stroke-width="1"/><text x="7.500" y="9" text-anchor="middle" font-family="Liberation Sans, sans-serif" font-weight="bold" font-size="9.5" fill="#12127e" stroke="#12127e" stroke-width="0.3" textLength="11.5" lengthAdjust="spacingAndGlyphs">abc</text></svg>
<span id="t85" class="t" style="left:1444px;top:90.1px;font-size:12.5px;line-height:18px;color:#000;font-weight:normal;transform:scaleX(1.0099);">actinl2</span>
<svg style="left:1413px;top:118px" width="10" height="1" viewBox="0 0 10 1"><path d="M0 0.500H10" stroke="#888" stroke-dasharray="1 1"/></svg>
<svg style="left:1423px;top:112px" width="15" height="12" viewBox="0 0 15 12"><rect x="0.5" y="0.5" width="14" height="10.5" fill="#fffbe6" stroke="#b39a72"/><path d="M14.5 0.5V11H0.5" fill="none" stroke="#7a6038" stroke-width="1"/><text x="7.500" y="9" text-anchor="middle" font-family="Liberation Sans, sans-serif" font-weight="bold" font-size="9.5" fill="#12127e" stroke="#12127e" stroke-width="0.3" textLength="11.5" lengthAdjust="spacingAndGlyphs">abc</text></svg>
<span id="t86" class="t" style="left:1444px;top:110.1px;font-size:12.5px;line-height:18px;color:#000;font-weight:normal;transform:scaleX(1.0162);">actmml1</span>
<svg style="left:1413px;top:138px" width="10" height="1" viewBox="0 0 10 1"><path d="M0 0.500H10" stroke="#888" stroke-dasharray="1 1"/></svg>
<svg style="left:1423px;top:132px" width="15" height="12" viewBox="0 0 15 12"><rect x="0.5" y="0.5" width="14" height="10.5" fill="#fffbe6" stroke="#b39a72"/><path d="M14.5 0.5V11H0.5" fill="none" stroke="#7a6038" stroke-width="1"/><text x="7.500" y="9" text-anchor="middle" font-family="Liberation Sans, sans-serif" font-weight="bold" font-size="9.5" fill="#12127e" stroke="#12127e" stroke-width="0.3" textLength="11.5" lengthAdjust="spacingAndGlyphs">abc</text></svg>
<span id="t87" class="t" style="left:1444px;top:130.1px;font-size:12.5px;line-height:18px;color:#000;font-weight:normal;transform:scaleX(1.0162);">actmml2</span>
<div class="clip" style="left:1413px;top:150px;width:100px;height:5px;">
<svg style="left:10px;top:2px" width="16" height="12" viewBox="0 0 16 12"><rect x="0.500" y="0.500" width="15" height="11" fill="#fffef4" stroke="#8a6d3b"/></svg>
<span id="t88" class="t" style="left:31px;top:0.1px;font-size:12.5px;line-height:18px;color:#000;font-weight:normal;transform:scaleX(1.0283);">actmmw1</span>
</div>
<div style="left:1382px;top:155px;width:117px;height:31px;background:#fff;border-left:1px solid #a0a0a0;border-bottom:1px solid #a0a0a0;"></div>
<div style="left:1498px;top:155px;width:104px;height:31px;background:#3358a3;"></div>
<span id="t89" class="t" style="left:1390px;top:158.3px;font-size:15px;line-height:21px;color:#000;font-weight:normal;transform:scaleX(0.9710);">Report Explorer</span>
<span id="t90" class="t" style="left:1506px;top:158.3px;font-size:15px;line-height:21px;color:#fff;font-weight:normal;transform:scaleX(0.9704);">Data Explorer</span>
<div style="left:1382px;top:191px;width:534px;height:32px;background:#3358a3;border-top:1px solid #274c9b;"></div>
<span id="t91" class="t" style="left:1388px;top:196.1px;font-size:17px;line-height:24px;color:#fff;font-weight:normal;transform:scaleX(1.0067);">Properties</span>
<svg style="left:1895px;top:202px" width="10" height="10" viewBox="0 0 10 10"><path d="M1.500 1.500L8.500 8.500M8.500 1.500L1.500 8.500" stroke="#fff" stroke-width="2.600"/></svg>
<div style="left:1382px;top:268px;width:534px;height:30px;background:#f0f0f0;"></div>
<div style="left:1384px;top:270px;width:29px;height:25px;background:#c5dcf5;border:1px solid #0a7ad9;"></div>
<svg style="left:1389px;top:274px" width="19" height="18" viewBox="0 0 19 18"><g fill="#2e2e2e"><rect x="0.500" y="1" width="6" height="6"/><rect x="0.500" y="12" width="6" height="6"/></g><g fill="#fff"><rect x="2.300" y="2.800" width="2.400" height="2.400"/><rect x="2.300" y="13.800" width="2.400" height="2.400"/></g><g stroke="#4a5560" stroke-width="1.200"><path d="M8 1.500H14M8 4H14M8 6.500H14M8 9H14M8 11.500H14M8 14.500H14M8 17H14"/></g><g fill="#3a434c"><rect x="15.500" y="3.400" width="2" height="1.200"/><rect x="15.500" y="5.900" width="2" height="1.200"/><rect x="15.500" y="8.400" width="2" height="1.200"/><rect x="15.500" y="10.900" width="2" height="1.200"/><rect x="15.500" y="16.400" width="2" height="1.200"/></g></svg>
<svg style="left:1417px;top:272px" width="22" height="22" viewBox="0 0 22 22"><rect x="0.500" y="0.500" width="11" height="11" fill="#fff" stroke="#cfcfcf" stroke-width="0.600"/><rect x="2" y="2" width="8" height="8" fill="#333"/><text x="6" y="9.300" text-anchor="middle" font-family="Liberation Sans, sans-serif" font-weight="bold" font-size="8" fill="#fff">A</text><text x="6" y="20.500" text-anchor="middle" font-family="Liberation Sans, sans-serif" font-weight="bold" font-size="10.500" fill="#222" stroke="#222" stroke-width="0.400">Z</text><path d="M15.500 6V15" fill="none" stroke="#0a50a0" stroke-width="2.200"/><path d="M10.800 12.500H20.200L15.500 18.500Z" fill="#0a50a0"/></svg>
<div style="left:1444px;top:271px;width:1px;height:25px;background:#8a8a8a;"></div>
<svg style="left:1453px;top:276px" width="19" height="16" viewBox="0 0 19 16"><rect x="5" y="0.500" width="13" height="13" fill="#ececec" stroke="#bdbdbd"/><rect x="5" y="0" width="13.500" height="2.500" fill="#b5b5b5"/><rect x="0.500" y="5.500" width="10" height="10" fill="#f4f4f4" stroke="#b5b5b5"/><rect x="0" y="5" width="11" height="2.500" fill="#b5b5b5"/><g stroke="#c4c4c4"><path d="M2 10.500H9M2 13H9M5.500 9V15"/></g></svg>
<div style="left:1382px;top:298px;width:534px;height:450px;background:#fff;border:1px solid #8e8e8e;"></div>
<div style="left:1383px;top:299px;width:511px;height:448px;background:#f3f5fb;"></div>
<div class="clip" style="left:1383px;top:299px;width:511px;height:448px;">
<svg style="left:7px;top:4px" width="12" height="12" viewBox="0 0 12 12"><polyline points="1,3 6,8 11,3" fill="none" stroke="#404040" stroke-width="1.700"/></svg>
<span id="t92" class="t" style="left:30px;top:0.0px;font-size:14.3px;line-height:20px;color:#000;font-weight:bold;transform:scaleX(1.0262);">Appearance</span>
<div style="left:26px;top:20px;width:206px;height:18px;background:#fff;"></div>
<div style="left:233px;top:20px;width:278px;height:18px;background:#fff;"></div>
<span id="t93" class="t" style="left:30px;top:19.0px;font-size:14.15px;line-height:20px;color:#000;font-weight:normal;">AccessibleDescription</span>
<div style="left:26px;top:39px;width:206px;height:18px;background:#fff;"></div>
<div style="left:233px;top:39px;width:278px;height:18px;background:#fff;"></div>
<span id="t94" class="t" style="left:30px;top:38.0px;font-size:14.15px;line-height:20px;color:#000;font-weight:normal;">AccessibleRole</span>
<div style="left:26px;top:58px;width:206px;height:18px;background:#fff;"></div>
<div style="left:233px;top:58px;width:278px;height:18px;background:#fff;"></div>
<span id="t95" class="t" style="left:30px;top:57.0px;font-size:14.15px;line-height:20px;color:#000;font-weight:normal;">Angle</span>
<span id="t96" class="t" style="left:236.5px;top:57.0px;font-size:14.15px;line-height:20px;color:#000;font-weight:normal;">0</span>
<div style="left:26px;top:77px;width:206px;height:18px;background:#fff;"></div>
<div style="left:233px;top:77px;width:278px;height:18px;background:#fff;"></div>
<span id="t97" class="t" style="left:30px;top:76.0px;font-size:14.15px;line-height:20px;color:#000;font-weight:normal;">ConditionalFormatting</span>
<div style="left:26px;top:96px;width:206px;height:18px;background:#fff;"></div>
<div style="left:233px;top:96px;width:278px;height:18px;background:#fff;"></div>
<span id="t98" class="t" style="left:30px;top:95.0px;font-size:14.15px;line-height:20px;color:#000;font-weight:normal;">Format</span>
<div style="left:26px;top:115px;width:206px;height:18px;background:#fff;"></div>
<div style="left:233px;top:115px;width:278px;height:18px;background:#fff;"></div>
<svg style="left:7px;top:118px" width="12" height="12" viewBox="0 0 12 12"><polyline points="3,1 8,6 3,11" fill="none" stroke="#404040" stroke-width="1.700"/></svg>
<span id="t99" class="t" style="left:30px;top:114.0px;font-size:14.15px;line-height:20px;color:#000;font-weight:normal;">Style</span>
<div style="left:26px;top:134px;width:206px;height:18px;background:#fff;"></div>
<div style="left:233px;top:134px;width:278px;height:18px;background:#fff;"></div>
<span id="t100" class="t" style="left:30px;top:133.0px;font-size:14.15px;line-height:20px;color:#000;font-weight:normal;">StyleName</span>
<div style="left:26px;top:153px;width:206px;height:18px;background:#fff;"></div>
<div style="left:233px;top:153px;width:278px;height:18px;background:#fff;"></div>
<span id="t101" class="t" style="left:30px;top:152.0px;font-size:14.15px;line-height:20px;color:#000;font-weight:normal;">TextWrap</span>
<span id="t102" class="t" style="left:236.5px;top:152.0px;font-size:14.15px;line-height:20px;color:#000;font-weight:normal;">True</span>
<div style="left:26px;top:172px;width:206px;height:18px;background:#fff;"></div>
<div style="left:233px;top:172px;width:278px;height:18px;background:#fff;"></div>
<svg style="left:7px;top:175px" width="12" height="12" viewBox="0 0 12 12"><polyline points="3,1 8,6 3,11" fill="none" stroke="#404040" stroke-width="1.700"/></svg>
<span id="t103" class="t" style="left:30px;top:171.0px;font-size:14.15px;line-height:20px;color:#000;font-weight:normal;">ToolTip</span>
<div style="left:26px;top:191px;width:206px;height:18px;background:#fff;"></div>
<div style="left:233px;top:191px;width:278px;height:18px;background:#fff;"></div>
<span id="t104" class="t" style="left:30px;top:190.0px;font-size:14.15px;line-height:20px;color:#000;font-weight:normal;">Value</span>
<svg style="left:7px;top:213px" width="12" height="12" viewBox="0 0 12 12"><polyline points="1,3 6,8 11,3" fill="none" stroke="#404040" stroke-width="1.700"/></svg>
<span id="t105" class="t" style="left:30px;top:209.0px;font-size:14.3px;line-height:20px;color:#000;font-weight:bold;transform:scaleX(1.0460);">Behavior</span>
<div style="left:26px;top:229px;width:206px;height:18px;background:#fff;"></div>
<div style="left:233px;top:229px;width:278px;height:18px;background:#fff;"></div>
<span id="t106" class="t" style="left:30px;top:228.0px;font-size:14.15px;line-height:20px;color:#000;font-weight:normal;">Culture</span>
<span id="t107" class="t" style="left:236.5px;top:228.0px;font-size:14.15px;line-height:20px;color:#000;font-weight:normal;">(Default)</span>
<div style="left:26px;top:248px;width:206px;height:18px;background:#fff;"></div>
<div style="left:233px;top:248px;width:278px;height:18px;background:#fff;"></div>
<span id="t108" class="t" style="left:30px;top:247.0px;font-size:14.15px;line-height:20px;color:#000;font-weight:normal;">ItemDataBinding</span>
<div style="left:26px;top:267px;width:206px;height:18px;background:#fff;"></div>
<div style="left:233px;top:267px;width:278px;height:18px;background:#fff;"></div>
<span id="t109" class="t" style="left:30px;top:266.0px;font-size:14.15px;line-height:20px;color:#000;font-weight:normal;">ItemDataBound</span>
<div style="left:26px;top:286px;width:206px;height:18px;background:#fff;"></div>
<div style="left:233px;top:286px;width:278px;height:18px;background:#fff;"></div>
<span id="t110" class="t" style="left:30px;top:285.0px;font-size:14.15px;line-height:20px;color:#000;font-weight:normal;">KeepTogether</span>
<span id="t111" class="t" style="left:236.5px;top:285.0px;font-size:14.15px;line-height:20px;color:#000;font-weight:normal;">True</span>
<div style="left:26px;top:305px;width:206px;height:18px;background:#fff;"></div>
<div style="left:233px;top:305px;width:278px;height:18px;background:#fff;"></div>
<span id="t112" class="t" style="left:30px;top:304.0px;font-size:14.15px;line-height:20px;color:#000;font-weight:normal;">Multiline</span>
<span id="t113" class="t" style="left:236.5px;top:304.0px;font-size:14.15px;line-height:20px;color:#000;font-weight:normal;">True</span>
<div style="left:26px;top:324px;width:206px;height:18px;background:#fff;"></div>
<div style="left:233px;top:324px;width:278px;height:18px;background:#fff;"></div>
<span id="t114" class="t" style="left:30px;top:323.0px;font-size:14.15px;line-height:20px;color:#000;font-weight:normal;">Visible</span>
<span id="t115" class="t" style="left:236.5px;top:323.0px;font-size:14.15px;line-height:20px;color:#000;font-weight:normal;">True</span>
<svg style="left:7px;top:346px" width="12" height="12" viewBox="0 0 12 12"><polyline points="1,3 6,8 11,3" fill="none" stroke="#404040" stroke-width="1.700"/></svg>
<span id="t116" class="t" style="left:30px;top:342.0px;font-size:14.3px;line-height:20px;color:#000;font-weight:bold;transform:scaleX(1.0000);">Data</span>
<div style="left:26px;top:362px;width:206px;height:18px;background:#eef2fb;"></div>
<div style="left:233px;top:362px;width:278px;height:18px;background:#fff;"></div>
<span id="t117" class="t" style="left:30px;top:361.0px;font-size:14.15px;line-height:20px;color:#000;font-weight:normal;">Bindings</span>
<span id="t118" class="t" style="left:237px;top:361.0px;font-size:14.3px;line-height:20px;color:#000;font-weight:bold;transform:scaleX(1.0064);">System.Windows.Forms.PropertyGridInt</span>
<svg style="left:7px;top:384px" width="12" height="12" viewBox="0 0 12 12"><polyline points="1,3 6,8 11,3" fill="none" stroke="#404040" stroke-width="1.700"/></svg>
<span id="t119" class="t" style="left:30px;top:380.0px;font-size:14.3px;line-height:20px;color:#000;font-weight:bold;transform:scaleX(1.0341);">Interactivity</span>
<div style="left:26px;top:400px;width:206px;height:18px;background:#fff;"></div>
<div style="left:233px;top:400px;width:278px;height:18px;background:#fff;"></div>
<span id="t120" class="t" style="left:30px;top:399.0px;font-size:14.15px;line-height:20px;color:#000;font-weight:normal;">Action</span>
<div style="left:26px;top:419px;width:206px;height:18px;background:#fff;"></div>
<div style="left:233px;top:419px;width:278px;height:18px;background:#fff;"></div>
<span id="t121" class="t" style="left:30px;top:418.0px;font-size:14.15px;line-height:20px;color:#000;font-weight:normal;">BookmarkId</span>
<div style="left:26px;top:438px;width:206px;height:18px;background:#fff;"></div>
<div style="left:233px;top:438px;width:278px;height:18px;background:#fff;"></div>
<span id="t122" class="t" style="left:30px;top:437.0px;font-size:14.15px;line-height:20px;color:#000;font-weight:normal;">DocumentMapText</span>
</div>
<div style="left:1894px;top:299px;width:21px;height:448px;background:#f0f0f0;"></div>
<div style="left:1895px;top:320px;width:19px;height:322px;background:#cdcdcd;"></div>
<svg style="left:1898px;top:304px" width="12" height="12" viewBox="0 0 12 12"><polyline points="1,8.5 6,3.5 11,8.5" fill="none" stroke="#4d4d4d" stroke-width="2.1"/></svg>
<svg style="left:1898px;top:731px" width="12" height="12" viewBox="0 0 12 12"><polyline points="1,3.5 6,8.5 11,3.5" fill="none" stroke="#4d4d4d" stroke-width="2.1"/></svg>
<div style="left:1382px;top:751px;width:534px;height:74px;background:#f0f0f0;border:1px solid #a0a0a0;"></div>
<span id="t123" class="t" style="left:1389px;top:752.5px;font-size:14.3px;line-height:20px;color:#000;font-weight:bold;transform:scaleX(1.0138);">Bindings</span>
<span id="t124" class="t" style="left:1389px;top:770.5px;font-size:14.15px;line-height:20px;color:#000;font-weight:normal;transform:scaleX(1.0057);">Gets the collection of binding rules contained within the report item</span>
<div style="left:1918px;top:0px;width:1px;height:828px;background:#7a7a7a;"></div>
<div style="left:0px;top:827px;width:1920px;height:1px;background:#666;"></div>
<div style="left:0px;top:827px;width:45px;height:1px;background:#000;"></div>
<div style="left:396px;top:355px;width:833px;height:364px;background:#f0f0f0;border:1px solid #b9b9b9;box-shadow:0 1px 9px 1px rgba(0,0,0,0.26);"></div>
<div style="left:397px;top:356px;width:831px;height:37px;background:#fff;"></div>
<span id="t125" class="t" style="left:406px;top:365.1px;font-size:14.7px;line-height:21px;color:#999;font-weight:normal;transform:scaleX(1.0148);">Edit Bindings</span>
<svg style="left:1074px;top:366px" width="14" height="14" viewBox="0 0 14 14"><path d="M1 7.500H13" stroke="#8a8a8a" stroke-width="1"/></svg>
<svg style="left:1132px;top:367px" width="14" height="14" viewBox="0 0 14 14"><rect x="1.500" y="1.500" width="11" height="11" fill="none" stroke="#8a8a8a" stroke-width="1"/></svg>
<svg style="left:1191px;top:367px" width="14" height="14" viewBox="0 0 14 14"><path d="M1 1L13 13M13 1L1 13" stroke="#8a8a8a" stroke-width="1.100"/></svg>
<svg style="left:409px;top:408px" width="14" height="16" viewBox="0 0 16 18"><path d="M1 1H10L15 6V17H1Z" fill="#fcd862" stroke="#e0a81c"/><path d="M10 1V6H15" fill="#fff1b8" stroke="#e0a81c"/><path d="M3.500 9.500H11M3.500 12.500H8" stroke="#fff3c4" stroke-width="1.500"/></svg>
<span id="t126" class="t" style="left:431px;top:407.6px;font-size:14.7px;line-height:21px;color:#000;font-weight:normal;transform:scaleX(1.0207);">New</span>
<svg style="left:488px;top:407px" width="15" height="18" viewBox="0 0 15 18"><path d="M2.500 5H12.500L11.500 17H3.500Z" fill="#e9e3b8" stroke="#6f6a4a"/><rect x="1" y="2.500" width="13" height="2.500" rx="1" fill="#c9c39a" stroke="#6f6a4a" stroke-width="0.800"/><path d="M5.500 2.500V1H9.500V2.500" fill="none" stroke="#6f6a4a"/><path d="M5.500 7V15M7.500 7V15M9.500 7V15" stroke="#8f8a62"/></svg>
<span id="t127" class="t" style="left:510px;top:407.6px;font-size:14.7px;line-height:21px;color:#000;font-weight:normal;transform:scaleX(1.0361);">Delete</span>
<svg style="left:584px;top:410px" width="12" height="12.500" viewBox="0 0 14 14"><path d="M7 1L13 7.500H9.500V13H4.500V7.500H1Z" fill="#8a8a8a"/></svg>
<svg style="left:614px;top:410px" width="12" height="12.500" viewBox="0 0 14 14"><path d="M7 13L13 6.500H9.500V1H4.500V6.500H1Z" fill="#8a8a8a"/></svg>
<div style="left:404px;top:438px;width:817px;height:227px;background:#a0a0a0;"></div>
<div style="left:404px;top:437px;width:817px;height:28px;background:#fff;border:1px solid #5a5a5a;"></div>
<div style="left:643px;top:437px;width:1px;height:28px;background:#5a5a5a;"></div>
<span id="t128" class="t" style="left:414px;top:442.1px;font-size:14.7px;line-height:21px;color:#000;font-weight:normal;transform:scaleX(1.0206);">Property path</span>
<span id="t129" class="t" style="left:652px;top:442.1px;font-size:14.7px;line-height:21px;color:#000;font-weight:normal;transform:scaleX(0.9634);">Expression</span>
<div style="left:404px;top:464px;width:817px;height:30px;background:#fff;border:1px solid #5a5a5a;"></div>
<div style="left:405px;top:465px;width:238px;height:28px;background:#e1e1e1;border:1px solid #8f8f8f;"></div>
<div style="left:621px;top:466px;width:1px;height:26px;background:#c8c8c8;"></div>
<div style="left:643px;top:464px;width:1px;height:30px;background:#5a5a5a;"></div>
<svg style="left:626px;top:474px" width="12" height="8" viewBox="0 0 12 8"><polyline points="1.500,1.500 6,6 10.500,1.500" fill="none" stroke="#444" stroke-width="1.100"/></svg>
<span id="t130" class="t" style="left:409px;top:469.6px;font-size:14.7px;line-height:21px;color:#000;font-weight:normal;transform:scaleX(1.0229);">Visible</span>
<span id="t131" class="t" style="left:649px;top:469.6px;font-size:14.7px;line-height:21px;color:#000;font-weight:normal;transform:scaleX(0.9933);">= (Fields.[NL-SH] + Fields.[NBX-C] + Fields.[NC-C] + Fields.NH1 + Fields.NT) &gt; 0</span>
<div style="left:1014px;top:674px;width:98px;height:33px;background:#e1e1e1;border:2px solid #0078d7;"></div>
<div style="left:1122px;top:674px;width:98px;height:33px;background:#e1e1e1;border:1px solid #adadad;"></div>
<span id="t132" class="t" style="left:1052px;top:680.6px;font-size:14.7px;line-height:21px;color:#000;font-weight:normal;transform:scaleX(0.9654);">OK</span>
<span id="t133" class="t" style="left:1148px;top:680.6px;font-size:14.7px;line-height:21px;color:#000;font-weight:normal;transform:scaleX(0.9402);">Cancel</span>
</body></html>
